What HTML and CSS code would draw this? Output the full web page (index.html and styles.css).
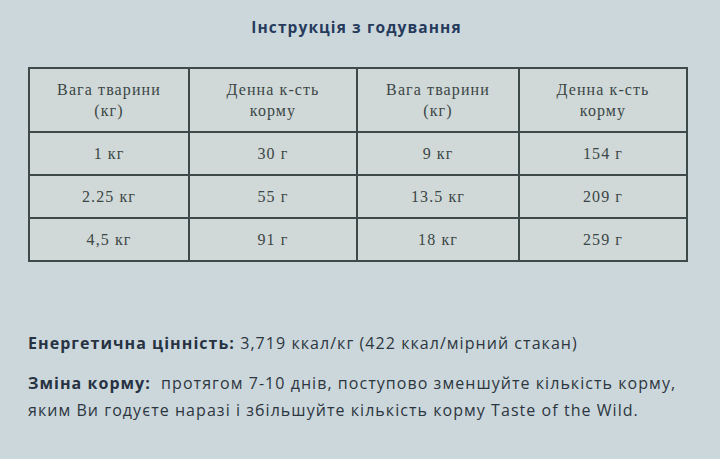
FILE: index.html
```html
<!DOCTYPE html>
<html lang="uk">
<head>
<meta charset="utf-8">
<title>Інструкція з годування</title>
<link rel="stylesheet" href="styles.css">
</head>
<body>
<main class="page">
  <h2 class="title">Інструкція з годування</h2>
  <div class="table-wrap">
    <table class="feed">
      <colgroup>
        <col class="c1"><col class="c2"><col class="c3"><col class="c4">
      </colgroup>
      <thead>
        <tr>
          <th>Вага тварини<br>(кг)</th>
          <th>Денна к-сть<br>корму</th>
          <th>Вага тварини<br>(кг)</th>
          <th>Денна к-сть<br>корму</th>
        </tr>
      </thead>
      <tbody>
        <tr><td>1 кг</td><td>30 г</td><td>9 кг</td><td>154 г</td></tr>
        <tr><td>2.25 кг</td><td>55 г</td><td>13.5 кг</td><td>209 г</td></tr>
        <tr><td>4,5 кг</td><td>91 г</td><td>18 кг</td><td>259 г</td></tr>
      </tbody>
    </table>
  </div>
  <p class="info"><strong>Енергетична цінність:</strong> 3,719 ккал/кг (422 ккал/мірний стакан)</p>
  <p class="info"><strong class="lbl">Зміна корму:</strong> протягом 7-10 днів, поступово зменшуйте кількість корму, яким Ви годуєте наразі і збільшуйте кількість корму Taste of the Wild.</p>
</main>
</body>
</html>
```

FILE: styles.css
```css
html, body {
  margin: 0;
  padding: 0;
  background: #ccd7dc;
}
.page {
  width: 720px;
  height: 459px;
  box-sizing: border-box;
  padding: 16px 0 0 28px;
  font-family: "Open Sans", "Noto Sans", sans-serif;
  color: #2c3640;
}
.title {
  margin: 0 35px 0 0;
  text-align: center;
  font-size: 15.5px;
  font-weight: 700;
  letter-spacing: 1.1px;
  color: #263b5c;
  line-height: 22px;
}
.table-wrap {
  margin-top: 29px;
  width: 658px;
}
.feed {
  width: 658px;
  border-collapse: collapse;
  table-layout: fixed;
  font-family: "Liberation Serif", "DejaVu Serif", serif;
  font-size: 16px;
  letter-spacing: 1.1px;
  color: #3b4646;
}
.feed .c1 { width: 160px; }
.feed .c2 { width: 168px; }
.feed .c3 { width: 162px; }
.feed .c4 { width: 168px; }
.feed th, .feed td {
  border: 2px solid #3e4a49;
  background: #d0d9d7;
  text-align: center;
  font-weight: 400;
  padding: 0;
}
.feed th {
  height: 62px;
  line-height: 21px;
}
.feed td {
  height: 41px;
}
.info {
  margin: 0;
  width: 672px;
  font-size: 16px;
  letter-spacing: 1.05px;
  line-height: 27px;
}
.info:first-of-type {
  margin-top: 68px;
}
.info + .info {
  margin-top: 13px;
}
.info strong {
  font-weight: 700;
  color: #273242;
}
.info .lbl {
  margin-right: 5px;
}
```
